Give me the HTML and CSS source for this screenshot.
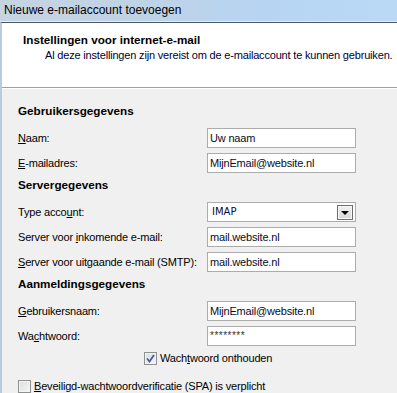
FILE: index.html
```html
<!DOCTYPE html>
<html lang="nl">
  <head>
    <meta charset="utf-8" />
    <title>Nieuwe e-mailaccount toevoegen</title>
    <link rel="stylesheet" href="styles.css">
  </head>
  <body>
    <div class="titlebar">Nieuwe e-mailaccount toevoegen</div>
    <div class="window">
      <div class="header">
        <h1 class="title">Instellingen voor internet-e-mail</h1>
        <div class="sub-title">Al deze instellingen zijn vereist om de e-mailaccount te kunnen gebruiken.</div>
      </div>
      <div class="content">
        <h2 class="section first">Gebruikersgegevens</h2>
        <div class="row">
          <label><u>N</u>aam:</label>
          <div class="field">Uw naam</div>
        </div>
        <div class="row">
          <label><u>E</u>-mailadres:</label>
          <div class="field">MijnEmail@website.nl</div>
        </div>

        <h2 class="section">Servergegevens</h2>
        <div class="row">
          <label>Type acco<u>u</u>nt:</label>
          <div class="field select">
            <span class="select-text">IMAP</span>
            <span class="drop-btn"><span class="arrow"></span></span>
          </div>
        </div>
        <div class="row">
          <label>Server voor <u>i</u>nkomende e-mail:</label>
          <div class="field">mail.website.nl</div>
        </div>
        <div class="row">
          <label><u>S</u>erver voor uitgaande e-mail (SMTP):</label>
          <div class="field">mail.website.nl</div>
        </div>

        <h2 class="section">Aanmeldingsgegevens</h2>
        <div class="row">
          <label><u>G</u>ebruikersnaam:</label>
          <div class="field">MijnEmail@website.nl</div>
        </div>
        <div class="row">
          <label>Wa<u>c</u>htwoord:</label>
          <div class="field password">********</div>
        </div>
        <div class="check-row remember">
          <span class="checkbox checked">
            <svg width="9" height="9" viewBox="0 0 9 9"><path d="M1 4.5 L3.5 7.5 L8 1" fill="none" stroke="#4a5a9c" stroke-width="1.8"/></svg>
          </span>
          <span>Wach<u>t</u>woord onthouden</span>
        </div>
        <div class="check-row spa">
          <span class="checkbox"></span>
          <span><u>B</u>eveiligd-wachtwoordverificatie (SPA) is verplicht</span>
        </div>
      </div>
    </div>
  </body>
</html>
```

FILE: styles.css
```css
body {
  margin: 0;
  width: 397px;
  height: 393px;
  overflow: hidden;
  font-family: "Liberation Sans", Arial, sans-serif;
  font-size: 11px;
  letter-spacing: -0.18px;
  color: #000;
  background-color: #f0f0f0;
  white-space: nowrap;
}
.titlebar {
  height: 21px;
  line-height: 20px;
  padding-left: 4px;
  background: linear-gradient(90deg, #c6d4e1 0%, #bfd3e6 35%, #b7d5f2 65%, #b9d9f5 100%);
  border-bottom: 1px solid #e6eef6;
  font-size: 12px;
  letter-spacing: 0;
}
.window {
  border-top: 1px solid #4a5563;
  border-left: 2px solid #b9cbdc;
  height: 370px;
}
.header {
  height: 65px;
  background-color: white;
  border-bottom: 1px solid #a0a0a0;
  box-sizing: border-box;
  padding-top: 9px;
}
.title {
  margin: 0 0 0 21px;
  font-size: 11.7px;
  font-weight: bold;
  line-height: 16px;
  letter-spacing: 0;
}
.sub-title {
  margin-left: 43px;
  line-height: 14px;
  color: #000033;
}
.content {
  border-top: 1px solid white;
  padding-left: 16px;
}
.section {
  margin: 4px 0 0 0;
  font-size: 11.7px;
  font-weight: bold;
  line-height: 16px;
  letter-spacing: 0;
}
.section.first {
  margin-top: 14px;
}
.row {
  display: flex;
  align-items: center;
  height: 20px;
  margin-top: 5px;
}
.section + .row {
  margin-top: 9px;
}
.row label {
  width: 189px;
}
.field {
  box-sizing: border-box;
  width: 149px;
  height: 20px;
  border: 1px solid #acacac;
  background-color: white;
  padding-left: 2px;
  line-height: 18px;
  font-size: 11px;
  color: #0a0a28;
}
.select {
  display: flex;
  align-items: center;
  justify-content: space-between;
  padding-right: 2px;
  font-family: "DejaVu Sans", sans-serif;
  font-size: 10px;
  letter-spacing: 0;
}
.select-text {
  padding-left: 2px;
}
.drop-btn {
  box-sizing: border-box;
  width: 16px;
  height: 15px;
  border: 1px solid #6f6f6f;
  box-shadow: inset 0 0 0 1px #f8f8f8;
  background: linear-gradient(#f2f2f2, #d6d6d6);
  display: flex;
  align-items: center;
  justify-content: center;
}
.arrow {
  width: 0;
  height: 0;
  border-left: 4px solid transparent;
  border-right: 4px solid transparent;
  border-top: 4px solid #000;
  margin-top: 2px;
}
.password {
  font-size: 10px;
  letter-spacing: 0.5px;
  color: #333;
}
.check-row {
  display: flex;
  align-items: center;
  height: 16px;
}
.check-row .checkbox {
  margin-right: 3px;
}
.remember {
  margin-top: 4px;
  margin-left: 126px;
}
.spa {
  margin-top: 12px;
}
.checkbox {
  box-sizing: border-box;
  width: 13px;
  height: 13px;
  border: 1px solid #8e8f8f;
  background: linear-gradient(135deg, #dcdcdc, #f6f6f6);
  box-shadow: inset 0 0 0 1px #f4f4f4;
  display: flex;
  align-items: center;
  justify-content: center;
}
.checkbox.checked {
  background: linear-gradient(135deg, #d8dde8, #f4f6fa);
}
```
